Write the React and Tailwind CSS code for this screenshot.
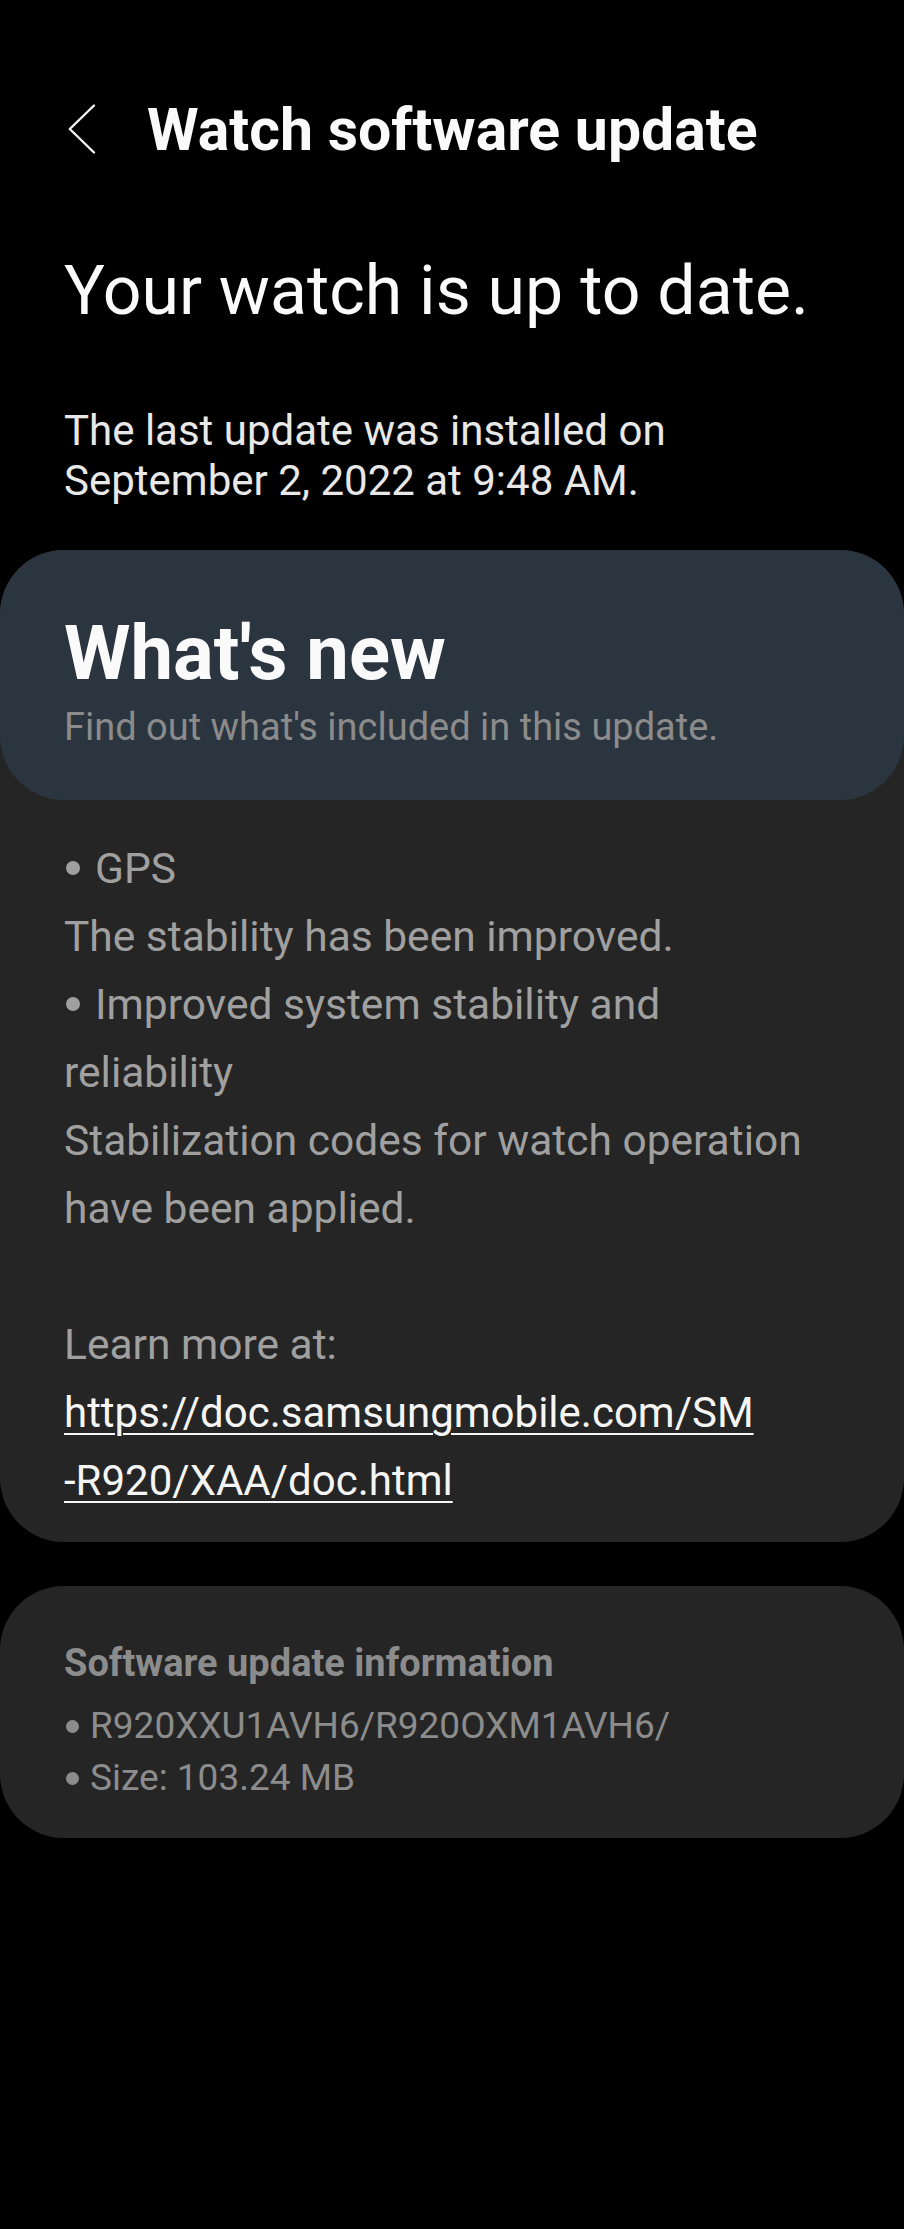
function Dot({ big }) {
  return big ? (
    <span className="inline-block w-[14px] h-[14px] rounded-full bg-current mb-[8px] ml-[2px] mr-[15px]"></span>
  ) : (
    <span className="inline-block w-[13px] h-[13px] rounded-full bg-current mb-[5px] ml-[2px] mr-[11px]"></span>
  );
}

export default function App() {
  return (
    <div className="min-h-[2229px] bg-black font-['Roboto',sans-serif] overflow-hidden">
      <div className="flex items-center h-[58px] mt-[100px]">
        <svg className="ml-[68px] shrink-0" width="28" height="50" viewBox="0 0 28 50" fill="none">
          <polyline points="26,1.5 1.8,25 26,48.5" stroke="#f5f5f5" strokeWidth="2.4" strokeLinecap="round" strokeLinejoin="round" />
        </svg>
        <h1 className="ml-[51px] text-[59px] leading-none font-bold text-[#fafafa] whitespace-nowrap">Watch software update</h1>
      </div>

      <div className="px-[64px]">
        <h2 className="mt-[99px] text-[68px] leading-none font-normal text-[#fafafa] whitespace-nowrap">Your watch is up to date.</h2>
        <p className="mt-[81px] text-[42px] leading-[50px] text-[#e8e8e8]">
          <span className="block">The last update was installed on</span>
          <span className="block">September 2, 2022 at 9:48 AM.</span>
        </p>
      </div>

      <section className="mt-[44px] bg-[#252525] rounded-[64px] pb-[27px]">
        <div className="bg-[#2b3540] rounded-[64px] h-[250px] px-[64px] pt-[65px]">
          <h3 className="text-[76px] leading-none font-bold text-[#fafafa] whitespace-nowrap">What's new</h3>
          <p className="mt-[17px] text-[38px] leading-none text-[#8b8b8b] whitespace-nowrap">Find out what's included in this update.</p>
        </div>
        <div className="px-[64px] pt-[35px] text-[42.5px] leading-[68px] text-[#a0a0a0]">
          <div><Dot big />GPS</div>
          <div>The stability has been improved.</div>
          <div><Dot big />Improved system stability and</div>
          <div>reliability</div>
          <div>Stabilization codes for watch operation</div>
          <div>have been applied.</div>
          <div className="h-[68px]"></div>
          <div>Learn more at:</div>
          <a href="#" className="block text-[42px] text-[#f5f5f5] underline decoration-[2px] underline-offset-[6px]">
            <span className="block">https://doc.samsungmobile.com/SM</span>
            <span className="block">-R920/XAA/doc.html</span>
          </a>
        </div>
      </section>

      <section className="mt-[44px] bg-[#252525] rounded-[64px] px-[64px] pt-[58px] pb-[34px]">
        <h4 className="text-[38px] leading-none font-bold text-[#8c8c8c] whitespace-nowrap">Software update information</h4>
        <ul className="mt-[18px] text-[37px] leading-[52px] text-[#8c8c8c]">
          <li className="whitespace-nowrap"><Dot />R920XXU1AVH6/R920OXM1AVH6/</li>
          <li className="whitespace-nowrap"><Dot />Size: 103.24 MB</li>
        </ul>
      </section>
    </div>
  );
}
